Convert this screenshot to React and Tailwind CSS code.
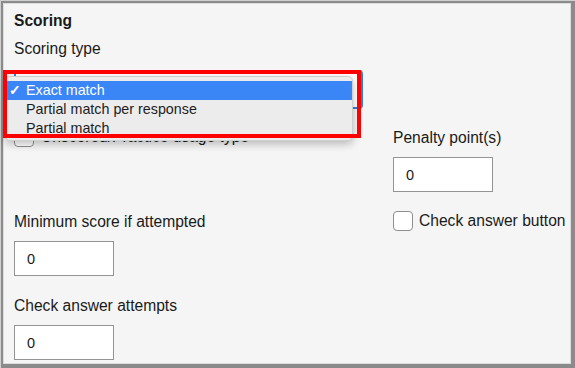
export default function App() {
  const input = "w-[100px] h-[35px] border border-[#949494] bg-white pl-[12px] flex items-center text-[14.5px] text-[#1a1a1a]";
  const checkbox = "w-[20px] h-[20px] shrink-0 rounded-[4px] border border-[#8e8e8e] bg-white";
  return (
    <div className="w-[575px] h-[368px] border-l border-t border-[#d0d0d0] font-['Liberation_Sans',Arial,sans-serif] text-[#1a1a1a]">
      <div className="w-full h-full border-l-2 border-t-2 border-r-4 border-b-4 border-[#8b8b8b]">
        <div className="relative w-full h-full border border-[#dcdcdc] bg-[#f5f5f5] pl-[10px] pt-[8px] text-[15.6px] leading-[18px]">
          <div className="font-bold">Scoring</div>
          <div className="mt-[10px]">Scoring type</div>
          <div className="mt-[12px] h-[39px] w-[349px] rounded-[4px] border-2 border-[#2b7fd6] bg-white"></div>

          <div className="mt-[18px] flex">
            <div className="w-[379px] flex flex-col">
              <div className="flex items-center gap-[7px] h-[20px]">
                <span className={checkbox}></span>
                <span>Unscored/Practice usage type</span>
              </div>
              <div className="mt-[66px]">Minimum score if attempted</div>
              <div className={"mt-[10px] " + input}>0</div>
              <div className="mt-[21px]">Check answer attempts</div>
              <div className={"mt-[10px] " + input}>0</div>
            </div>
            <div className="flex flex-col">
              <div className="mt-[2px]">Penalty point(s)</div>
              <div className={"mt-[10px] " + input}>0</div>
              <div className="mt-[19px] flex items-center gap-[6px] h-[20px]">
                <span className={checkbox}></span>
                <span className="whitespace-nowrap">Check answer button</span>
              </div>
            </div>
          </div>

          <div className="absolute left-[1px] top-[72px] w-[348px] rounded-[5px] bg-[#ececec] border border-[#cfcfcf] shadow-[0_3px_8px_rgba(0,0,0,0.25)] pt-[4px] pb-[2px] text-[14.3px] leading-[19px] text-[#1d1d1d]">
            <div className="relative h-[19px] pl-[20px] bg-[#3b86f7] text-white">
              <span className="absolute left-[3px] top-0 font-bold">✓</span>
              Exact match
            </div>
            <div className="h-[19px] pl-[20px]">Partial match per response</div>
            <div className="h-[19px] pl-[20px]">Partial match</div>
          </div>

          <div className="absolute left-[-1px] top-[66px] w-[358px] h-[68px] border-4 border-[#fe0000]"></div>
        </div>
      </div>
    </div>
  );
}
